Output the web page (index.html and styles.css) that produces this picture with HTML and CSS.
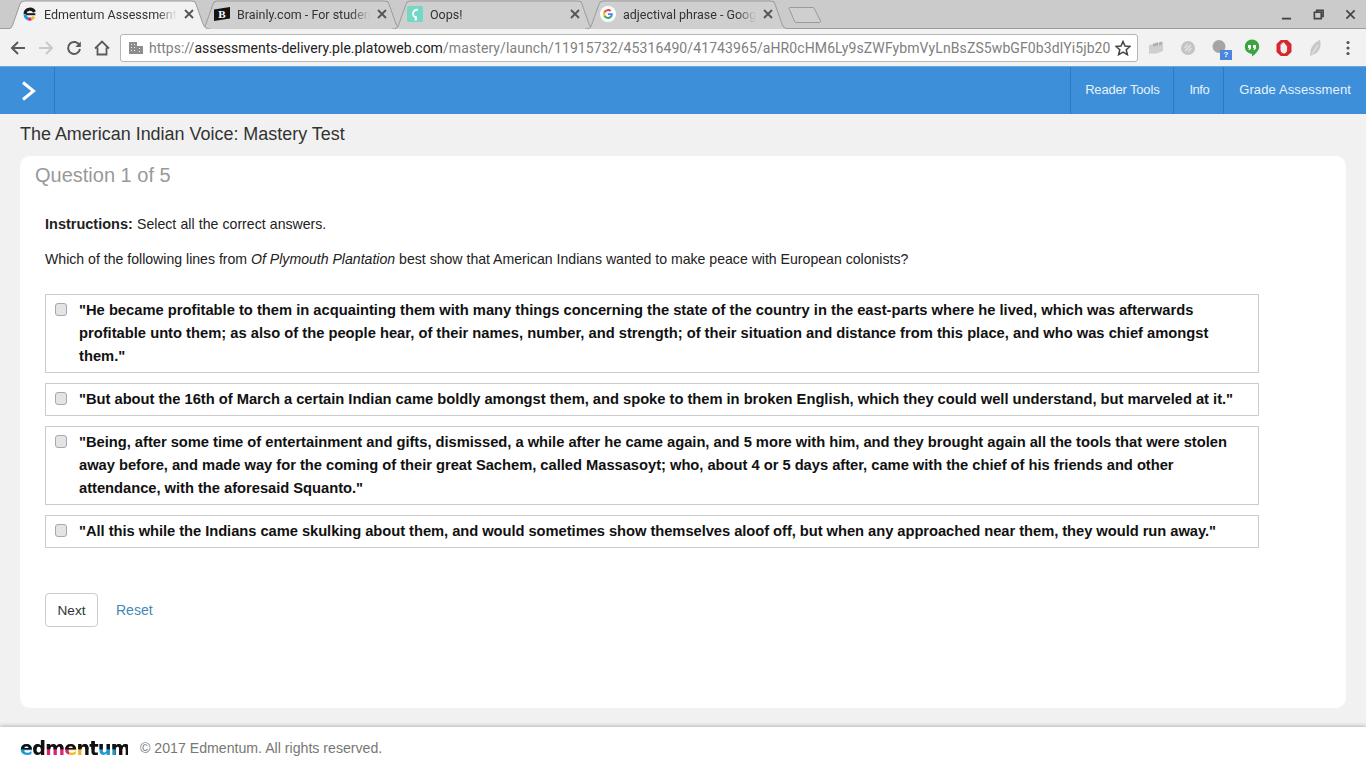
FILE: index.html
```html
<!DOCTYPE html>
<html lang="en">
<head>
<meta charset="utf-8">
<title>Edmentum Assessments</title>
<link rel="stylesheet" href="styles.css">
</head>
<body>
<div class="chrome">
  <div class="tabstrip">
    <div class="tab active">
      <svg class="tab-shape" viewBox="0 0 204 28" preserveAspectRatio="none"><path d="M0 28 C5 28 6 26 7 23 L14 4 C15 1 17 1 19 1 H185 C188 1 189 1 190 4 L197 23 C198 26 200 28 204 28" fill="#f2f2f2" stroke="#9c9c9c"/></svg>
      <svg class="fav" viewBox="0 0 16 16"><path d="M4 8a5 5 0 0 1 9.500-2" fill="none" stroke="#1a1a1a" stroke-width="3"/><path d="M4.500 8.200H14.300" stroke="#1a1a1a" stroke-width="2"/><path d="M4 8.500a5 5 0 0 0 3 4.300" fill="none" stroke="#1c9ad6" stroke-width="3"/><path d="M7 12.800a5 5 0 0 0 3.500 0" fill="none" stroke="#d8256f" stroke-width="3"/><path d="M10.500 12.800a5 5 0 0 0 2.500-2" fill="none" stroke="#f0b52a" stroke-width="3"/></svg>
      <span class="tab-title">Edmentum Assessments</span>
      <svg class="tab-x" viewBox="0 0 10 10"><path d="M1 1l8 8M9 1l-8 8"/></svg>
    </div>
    <div class="tab">
      <svg class="tab-shape" viewBox="0 0 204 28" preserveAspectRatio="none"><path d="M0 28 C5 28 6 26 7 23 L14 4 C15 1 17 1 19 1 H185 C188 1 189 1 190 4 L197 23 C198 26 200 28 204 28" fill="#cfcfcf" stroke="#9c9c9c"/></svg>
      <svg class="fav" viewBox="0 0 16 16"><path d="M0 3.500L16 1V12.500L0 15z" fill="#141414"/><text x="8" y="11.500" class="fav-b">B</text></svg>
      <span class="tab-title">Brainly.com - For students</span>
      <svg class="tab-x" viewBox="0 0 10 10"><path d="M1 1l8 8M9 1l-8 8"/></svg>
    </div>
    <div class="tab">
      <svg class="tab-shape" viewBox="0 0 204 28" preserveAspectRatio="none"><path d="M0 28 C5 28 6 26 7 23 L14 4 C15 1 17 1 19 1 H185 C188 1 189 1 190 4 L197 23 C198 26 200 28 204 28" fill="#cfcfcf" stroke="#9c9c9c"/></svg>
      <svg class="fav" viewBox="0 0 16 16"><rect width="16" height="16" rx="1.500" fill="#74d8c4"/><path d="M11 3.800A4 4 0 0 0 6 7.500 4 4 0 0 0 10 11.500M9 11.500L8.500 14.500" fill="none" stroke="#fff" stroke-width="2"/></svg>
      <span class="tab-title">Oops!</span>
      <svg class="tab-x" viewBox="0 0 10 10"><path d="M1 1l8 8M9 1l-8 8"/></svg>
    </div>
    <div class="tab">
      <svg class="tab-shape" viewBox="0 0 204 28" preserveAspectRatio="none"><path d="M0 28 C5 28 6 26 7 23 L14 4 C15 1 17 1 19 1 H185 C188 1 189 1 190 4 L197 23 C198 26 200 28 204 28" fill="#cfcfcf" stroke="#9c9c9c"/></svg>
      <svg class="fav" viewBox="0 0 16 16"><circle cx="8" cy="8" r="8" fill="#fff"/><path d="M12.800 8.200c0-.4 0-.7-.1-1H8v1.900h2.700a2.300 2.300 0 0 1-1 1.500l1.500 1.200c.9-.9 1.600-2.100 1.600-3.600z" fill="#4285f4"/><path d="M8 13c1.300 0 2.400-.4 3.200-1.200l-1.500-1.200c-.4.3-1 .5-1.700.5a3 3 0 0 1-2.800-2L3.600 10.300A5 5 0 0 0 8 13z" fill="#34a853"/><path d="M5.200 9.100a3 3 0 0 1 0-2L3.600 5.800a5 5 0 0 0 0 4.500z" fill="#fbbc05"/><path d="M8 5c.7 0 1.400.3 1.900.7l1.400-1.400A5 5 0 0 0 3.600 5.800l1.600 1.300A3 3 0 0 1 8 5z" fill="#ea4335"/></svg>
      <span class="tab-title">adjectival phrase - Google Search</span>
      <svg class="tab-x" viewBox="0 0 10 10"><path d="M1 1l8 8M9 1l-8 8"/></svg>
    </div>
    <svg class="newtab" viewBox="0 0 36 18"><path d="M2 2.500C2 2 2.300 1.500 3 1.500H26C26.500 1.500 27 1.800 27.200 2.300L33.500 15C33.800 15.800 33.400 16.500 32.500 16.500H9C8.500 16.500 8 16.200 7.800 15.700Z" fill="#cfcfcf" stroke="#9a9a9a"/></svg>
    <div class="winctl">
      <svg viewBox="0 0 12 12"><path d="M1 10.500h10" stroke-width="2"/></svg>
      <svg viewBox="0 0 12 12"><path d="M4 3V1.500h7V8H9M1.500 3.500H9V10.500H1.500z" stroke-width="1.800"/></svg>
      <svg viewBox="0 0 12 12"><path d="M1.500 1.500l9 9M10.500 1.500l-9 9" stroke-width="1.800"/></svg>
    </div>
  </div>
  <div class="toolbar">
    <svg class="nav" viewBox="0 0 16 16"><path d="M15 8H2M8 2L2 8l6 6" fill="none" stroke="#5a5a5a" stroke-width="2"/></svg>
    <svg class="nav" viewBox="0 0 16 16"><path d="M1 8h13M8 2l6 6-6 6" fill="none" stroke="#c9c9c9" stroke-width="2"/></svg>
    <svg class="nav" viewBox="0 0 16 16"><path d="M13.600 5.500A6 6 0 1 0 14 9" fill="none" stroke="#5a5a5a" stroke-width="2"/><path d="M14.800 1.500V7H9.300z" fill="#5a5a5a"/></svg>
    <svg class="nav" viewBox="0 0 16 16"><path d="M1 8.500L8 1.500l7 7M3.500 7.500V14.500H12.500V7.500" fill="none" stroke="#5a5a5a" stroke-width="1.800"/></svg>
    <div class="omnibox">
      <svg class="site" viewBox="0 0 14 12"><path d="M0 0h8v12H0zM8 4h6v8H8z" fill="#8d8d8d"/><path d="M2 2h1v1H2zM5 2h1v1H5zM2 5h1v1H2zM5 5h1v1H5zM2 8h1v1H2zM5 8h1v1H5zM10 6h1v1h-1zM10 9h1v1h-1z" fill="#eee"/></svg>
      <span class="url"><span class="url-dim">https://</span>assessments-delivery.ple.platoweb.com<span class="url-dim url-path">/mastery/launch/11915732/45316490/41743965/aHR0cHM6Ly9sZWFybmVyLnBsZS5wbGF0b3dlYi5jb20</span></span>
      <svg class="star" viewBox="0 0 16 16"><path d="M8 1.500l2 4.600 5 .4-3.800 3.300 1.200 4.900L8 12.100l-4.400 2.600 1.200-4.900L1 6.500l5-.4z" fill="none" stroke="#444" stroke-width="1.500"/></svg>
    </div>
    <div class="exts">
      <svg viewBox="0 0 16 18"><path d="M1 6l4-1v9l-4 1zM5 4.500l5-1.500v11l-5 1zM10 4l5-1v9l-5 2z" fill="#cfcfcf"/><path d="M5 5l5-1.500v3l-5 1zM11 3.500l3-1v3l-3 1z" fill="#b0b0b0"/></svg>
      <svg viewBox="0 0 16 18"><circle cx="8" cy="9" r="7" fill="#c4c4c4"/><path d="M5 12l6-6M4.500 9L8 5.500M8 12.500L11.500 9" stroke="#e4e4e4" stroke-width="1.500"/></svg>
      <span class="ext-badge-wrap">
        <svg viewBox="0 0 16 18"><circle cx="7" cy="7.500" r="6.500" fill="#a5a5a5"/></svg>
        <span class="ext-badge">?</span>
      </span>
      <svg viewBox="0 0 16 18"><path d="M8 0.500a7.200 7.200 0 0 1 7.200 7.200c0 4-3.500 7-7.200 9.800V14.900A7.200 7.200 0 0 1 8 .5z" fill="#3aa63d"/><path d="M4 6h3v3.500L5.500 11H4.500L5 9H4zM9 6h3v3.500L10.500 11H9.500L10 9H9z" fill="#fff"/></svg>
      <svg viewBox="0 0 16 18"><path d="M4.800 1h6.400L15.500 5v8L11.200 17H4.800L.5 13V5z" fill="#d4282c"/><path d="M4.500 8V5.500h1V4.200h1.200V3.300h1.200v.9h1.200v1.300h1V7l1-.5V11c0 2.200-1.500 3.600-3.100 3.600S4.500 12.800 4.500 11z" fill="#f4ecec"/></svg>
      <svg viewBox="0 0 16 18"><path d="M12 1C8 2.500 3 7 2.500 12L2 17 5 15.500C10.500 14.500 14 8 12 1z" fill="#c8c8c8"/><path d="M4.500 14.500L10 6" stroke="#eee"/></svg>
    </div>
    <svg class="menu" viewBox="0 0 4 16"><circle cx="2" cy="2.500" r="1.600"/><circle cx="2" cy="8" r="1.600"/><circle cx="2" cy="13.500" r="1.600"/></svg>
  </div>
</div>

<header class="appbar">
  <button class="toggle" type="button" aria-label="Open menu">
    <svg viewBox="0 0 16 20"><path d="M3 1.500L13.500 10 3 18.500" fill="none" stroke="#fff" stroke-width="3"/></svg>
  </button>
  <nav class="appnav">
    <a class="nav-reader">Reader Tools</a>
    <a class="nav-info">Info</a>
    <a class="nav-grade">Grade Assessment</a>
  </nav>
</header>

<main class="main">
  <h1 class="test-title">The American Indian Voice: Mastery Test</h1>
  <section class="card">
    <h2 class="q-num">Question 1 of 5</h2>
    <div class="q-body">
      <p class="q-instr"><strong>Instructions:</strong> Select all the correct answers.</p>
      <p class="q-text">Which of the following lines from <em>Of Plymouth Plantation</em> best show that American Indians wanted to make peace with European colonists?</p>
      <div class="answers">
        <label class="answer"><input type="checkbox"><span>"He became profitable to them in acquainting them with many things concerning the state of the country in the east-parts where he lived, which was afterwards profitable unto them; as also of the people hear, of their names, number, and strength; of their situation and distance from this place, and who was chief amongst them."</span></label>
        <label class="answer tight-a"><input type="checkbox"><span>"But about the 16th of March a certain Indian came boldly amongst them, and spoke to them in broken English, which they could well understand, but marveled at it."</span></label>
        <label class="answer tight-a"><input type="checkbox"><span>"Being, after some time of entertainment and gifts, dismissed, a while after he came again, and 5 more with him, and they brought again all the tools that were stolen away before, and made way for the coming of their great Sachem, called Massasoyt; who, about 4 or 5 days after, came with the chief of his friends and other attendance, with the aforesaid Squanto."</span></label>
        <label class="answer tight-b"><input type="checkbox"><span>"All this while the Indians came skulking about them, and would sometimes show themselves aloof off, but when any approached near them, they would run away."</span></label>
      </div>
      <div class="actions">
        <button class="btn-next" type="button">Next</button>
        <a class="reset">Reset</a>
      </div>
    </div>
  </section>
</main>

<footer class="footer">
  <span class="logo">edmentum</span>
  <span class="copy">© 2017 Edmentum. All rights reserved.</span>
</footer>
</body>
</html>
```
FILE: styles.css
```css
* { box-sizing: border-box; }
html, body { margin: 0; height: 100%; }
body {
  width: 1366px; height: 768px; overflow: hidden;
  display: flex; flex-direction: column;
  background: #f1f1f1;
  font-family: "Liberation Sans", Arial, sans-serif;
  color: #222;
}
.chrome { flex: none; height: 66px; background: #f2f2f2; }
.tabstrip {
  height: 29px; background: #cbcbcb;
  border-bottom: 1px solid #9c9c9c;
  display: flex; align-items: flex-start; padding-left: 6px;
  font-family: Roboto, sans-serif;
}
.tab {
  position: relative; flex: none; width: 204px; height: 29px; margin-right: -11px;
  display: flex; align-items: center; padding: 0 16px 0 15px; gap: 7px;
  font-size: 12.500px; color: #333;
}
.tab.active { z-index: 2; }
.tab-shape { position: absolute; inset: 0; width: 100%; height: 100%; }
.fav, .tab-title, .tab-x { position: relative; }
.fav { width: 16px; height: 16px; flex: none; margin-top: -2px; }
.fav-b { font: 900 11px "Liberation Serif", serif; fill: #fff; text-anchor: middle; }
.tab-title {
  flex: 1; min-width: 0; white-space: nowrap; overflow: hidden; margin-top: -1px;
  -webkit-mask-image: linear-gradient(to right, #000 85%, transparent 100%);
  mask-image: linear-gradient(to right, #000 85%, transparent 100%);
}
.tab-x { width: 10px; height: 10px; flex: none; fill: none; stroke: #555; stroke-width: 1.800; margin-top: -1px; }
.newtab { width: 36px; height: 18px; margin: 6px 0 0 9px; flex: none; }
.winctl { margin-left: auto; display: flex; gap: 21px; padding: 9px 10px 0 0; }
.winctl svg { width: 11px; height: 11px; fill: none; stroke: #444; }
.toolbar {
  height: 37px; display: flex; align-items: center; padding: 0 0 0 10px; gap: 12px;
  background: #f2f2f2;
}
.nav { width: 16px; height: 16px; flex: none; }
.omnibox {
  width: 1018px; height: 28px; margin-left: -2px; flex: none;
  display: flex; align-items: center;
  background: #fff; border: 1px solid #b5b5b5; border-radius: 3px;
  padding: 0 6px 0 8px; font-family: Roboto, sans-serif; font-size: 14px; color: #222;
}
.site { width: 14px; height: 12px; flex: none; margin-right: 6px; }
.url { flex: 1; min-width: 0; overflow: hidden; white-space: nowrap; }
.url-dim { color: #808080; }
.url-path { letter-spacing: .100px; }
.star { width: 16px; height: 16px; flex: none; margin-left: 5px; }
.exts { display: flex; align-items: center; gap: 16px; margin-left: -2px; }
.exts svg { width: 16px; height: 18px; display: block; }
.ext-badge-wrap { position: relative; display: block; }
.ext-badge {
  position: absolute; left: 8px; top: 11px; width: 12px; height: 10px;
  background: #4a86e0; color: #fff; font-size: 8px; line-height: 10px; text-align: center; font-weight: bold;
}
.menu { width: 4px; height: 16px; flex: none; margin-left: 10px; fill: #555; }

.appbar {
  flex: none; height: 48px; background: #3d8fd9;
  display: flex; justify-content: space-between;
  border-top: 1px solid #6ea6de;
}
.toggle {
  width: 55px; background: none; padding: 0 0 0 1px; border: 0; border-right: 1px solid #2f78c4;
  display: flex; align-items: center; justify-content: center;
}
.toggle svg { width: 16px; height: 20px; }
.appnav { display: flex; color: #e9f2fb; font-size: 13px; }
.appnav a {
  display: flex; align-items: center; padding: 0 14px 3px 15px;
  border-left: 1px solid #2f78c4;
}
.appnav .nav-reader { padding-left: 14px; letter-spacing: -.170px; }
.appnav .nav-info { letter-spacing: -.500px; }
.appnav .nav-grade { padding-right: 15px; letter-spacing: .125px; }
.main { flex: 1; min-height: 0; padding: 0 20px 19px; display: flex; flex-direction: column; }
.test-title { margin: 10px 0 11px; font-size: 17.950px; line-height: 21px; font-weight: 400; color: #333; }
.card { flex: 1; background: #fff; border-radius: 10px; padding: 6px 15px 0; }
.q-num { margin: 0; font-size: 20px; line-height: 26px; font-weight: 400; color: #999; }
.q-body { padding: 0 10px; }
.q-instr { margin: 27px 0 0; font-size: 14.100px; line-height: 18px; color: #222; word-spacing: .300px; }
.q-instr strong { font-size: 14.500px; }
.q-text { margin: 17px 0 0; font-size: 14.100px; line-height: 18px; color: #222; }
.answers { margin-top: 26px; width: 1214px; display: flex; flex-direction: column; gap: 10px; }
.answer {
  display: flex; align-items: flex-start; gap: 12px;
  border: 1px solid #ccc; padding: 4px 10px 4px 9px;
  font-size: 14.730px; line-height: 23px; font-weight: 700; color: #111;
}
.tight-a { letter-spacing: -.025px; }
.tight-b { letter-spacing: -.050px; }
.answer input {
  appearance: none; -webkit-appearance: none;
  width: 12px; height: 13px; margin: 4px 0 0; flex: none;
  background: #e4e4e4; border: 1px solid #a8a8a8; border-radius: 3px;
}
.actions { margin-top: 45px; display: flex; align-items: center; gap: 18px; }
.btn-next {
  height: 34px; width: 53px; background: #fff; border: 1px solid #ccc; border-radius: 4px;
  font: 13.600px "Liberation Sans", Arial, sans-serif; color: #333; padding: 0;
}
.reset { font-size: 14px; color: #3f8ab5; }
.footer {
  flex: none; height: 41px; background: #fff; display: flex; align-items: center;
  padding: 0 0 0 20px; gap: 12px;
  box-shadow: 0 -1px 4px rgba(0,0,0,.25);
}
.logo {
  font: 700 19px/21px "DejaVu Sans", sans-serif; letter-spacing: -.650px; width: 108px; white-space: nowrap; margin-top: 1px;
  background:
    linear-gradient(to bottom, #111 50%, transparent 58%),
    linear-gradient(to right, #1c9ad6 0 12%, #111 12% 24%, #d8256f 24% 45%, #f0b52a 45% 58%, #111 58% 72%, #1c9ad6 72% 88%, #111 88%);
  -webkit-background-clip: text; background-clip: text;
  color: transparent;
}
.copy { font-size: 14.150px; color: #777; }
```
